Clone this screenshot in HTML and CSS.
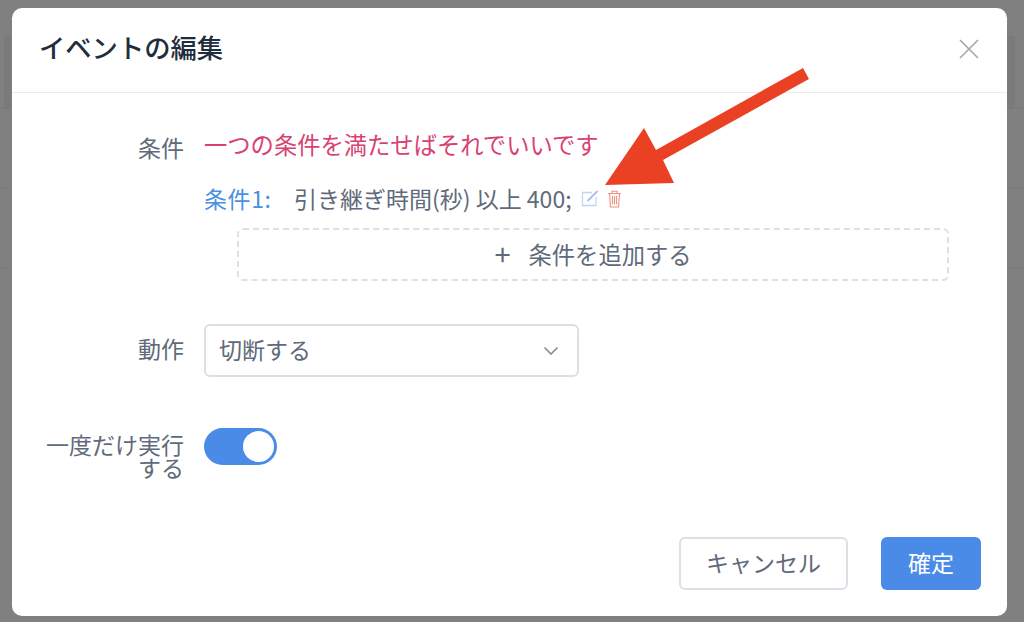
FILE: index.html
```html
<!DOCTYPE html>
<html lang="ja">
<head>
    <meta charset="UTF-8">
    <meta name="viewport" content="width=device-width, initial-scale=1.0">
    <title>イベントの編集</title>
    <link rel="stylesheet" href="styles.css">
</head>
<body>
    <div class="dialog">
        <header class="dialog-header">
            <h1>イベントの編集</h1>
            <button class="close-button" aria-label="閉じる">
                <svg width="20" height="20" viewBox="0 0 20 20"><path d="M1 1L19 19M19 1L1 19" stroke="#a3a6ad" stroke-width="1.6" fill="none"/></svg>
            </button>
        </header>
        <main class="dialog-body">
            <div class="field field-conditions">
                <div class="field-label">条件</div>
                <div class="field-content">
                    <p class="hint">一つの条件を満たせばそれでいいです</p>
                    <div class="condition">
                        <span class="condition-name">条件1:</span>
                        <span class="condition-text">引き継ぎ時間(秒) 以上 400;</span>
                        <svg class="icon-edit" width="18" height="17" viewBox="0 0 18 17"><path d="M11 2.5H1.5V15.5H15V7" stroke="#c5d4ee" stroke-width="1.3" fill="none"/><path d="M6.5 11L16.5 1" stroke="#a9c1ea" stroke-width="1.8" fill="none"/></svg>
                        <svg class="icon-trash" width="15" height="18" viewBox="0 0 15 18"><path d="M1 3.5H14M5 3.5V1.2H10V3.500M2.500 3.500L3.500 17H11.500L12.500 3.500M5.500 6V14.500M7.500 6V14.500M9.500 6V14.500" stroke="#f19180" stroke-width="1.100" fill="none"/></svg>
                    </div>
                    <button class="add-condition"><span class="plus">+</span>条件を追加する</button>
                </div>
            </div>
            <div class="field field-action">
                <div class="field-label">動作</div>
                <div class="select">
                    <span>切断する</span>
                    <svg width="16" height="10" viewBox="0 0 16 10"><path d="M1.500 1.500L8 8L14.500 1.500" stroke="#8b8f98" stroke-width="1.700" fill="none"/></svg>
                </div>
            </div>
            <div class="field field-once">
                <div class="field-label">一度だけ実行する</div>
                <div class="switch"><span class="switch-knob"></span></div>
            </div>
        </main>
        <footer class="dialog-footer">
            <button class="btn btn-cancel">キャンセル</button>
            <button class="btn btn-primary">確定</button>
        </footer>
    </div>
    <!-- annotation arrow on top of the screenshot -->
    <svg class="arrow" width="1024" height="622" viewBox="0 0 1024 622"><polygon points="803,68 809,79 663,160 674,183 605,185 644,128 656,150" fill="#ea4125"/></svg>
</body>
</html>
```

FILE: styles.css
```css
* { box-sizing: border-box; }
html, body { height: 100%; }
body {
    margin: 0;
    padding: 8px 17px 6px 12px;
    background-color: #808080;
    /* page behind the overlay: faint row lines and two bands */
    background-image:
        linear-gradient(#7a7a7a, #7a7a7a),
        linear-gradient(#7a7a7a, #7a7a7a),
        linear-gradient(#7a7a7a, #7a7a7a),
        linear-gradient(#7a7a7a, #7a7a7a),
        linear-gradient(#7a7a7a, #7a7a7a);
    background-repeat: no-repeat;
    background-size: 7px 72px, 8px 72px, 100% 1px, 100% 1px, 100% 1px;
    background-position: 4px 36px, 1007px 36px, 0 108px, 0 188px, 0 268px;
    font-family: "Noto Sans CJK JP", "Noto Sans", sans-serif;
    color: #606a7a;
    overflow: hidden;
}
button { font-family: inherit; }

.dialog {
    height: 100%;
    background-color: #fff;
    border-radius: 10px;
    display: flex;
    flex-direction: column;
}
.dialog-header {
    height: 85px;
    flex: none;
    border-bottom: 1px solid #ebebeb;
    display: flex;
    align-items: center;
    justify-content: space-between;
    padding: 0 28px 2px 27px;
}
.dialog-header h1 {
    margin: 0 0 6px;
    font-size: 26.3px;
    font-weight: 500;
    color: #1f2d3d;
}
.close-button {
    border: none;
    background: none;
    padding: 0;
    display: flex;
}

.dialog-body { flex: 1; padding-top: 28px; }
.field { display: flex; gap: 20px; }
.field-label {
    width: 172px;
    flex: none;
    text-align: right;
    font-size: 23px;
    line-height: 23px;
    padding-top: 15px;
}
.field-content { flex: 1; }
.hint {
    margin: 0;
    font-size: 23.3px;
    line-height: 46px;
    color: #d9426f;
}
.condition {
    display: flex;
    align-items: center;
    height: 46px;
    margin-top: 8px;
    margin-bottom: 7px;
    font-size: 23px;
}
.condition-name { color: #4a90e2; width: 90px; letter-spacing: 0.6px; }
.icon-edit { margin-left: 9px; margin-top: 1px; }
.icon-trash { margin-left: 8px; margin-top: 1px; }
.add-condition {
    display: block;
    margin: 0 0 0 33px;
    width: 712px;
    height: 53px;
    padding: 0 0 2px;
    background: #fff;
    border: 2px dashed #dcdfe6;
    border-radius: 6px;
    color: #606a7a;
    font-size: 23.3px;
}
.plus {
    margin-right: 18px;
    font-size: 29px;
    line-height: 0;
    vertical-align: -2px;
}

.field-action { margin-top: 43px; }
.field-action .field-label { padding-top: 13px; }
.select {
    width: 375px;
    height: 53px;
    border: 2px solid #dcdfe6;
    border-radius: 6px;
    display: flex;
    align-items: center;
    justify-content: space-between;
    padding: 0 18px 3px 13px;
    font-size: 23px;
}
.select svg { margin-top: 3px; }

.field-once { margin-top: 51px; }
.field-once .field-label { padding-top: 5px; padding-left: 30px; }
.switch {
    width: 73px;
    height: 37px;
    border-radius: 19px;
    background-color: #4a8be8;
    position: relative;
}
.switch-knob {
    position: absolute;
    top: 3px;
    right: 3px;
    width: 31px;
    height: 31px;
    border-radius: 50%;
    background-color: #fff;
}

.dialog-footer {
    display: flex;
    justify-content: flex-end;
    gap: 33px;
    padding: 0 26px 26px 0;
}
.btn {
    height: 53px;
    border-radius: 6px;
    padding: 0 0 3px;
    font-size: 23px;
}
.btn-cancel {
    width: 169px;
    background: #fff;
    border: 2px solid #dcdfe6;
    color: #606a7a;
}
.btn-primary {
    width: 100px;
    background-color: #4a8be8;
    border: none;
    color: #fff;
}

.arrow {
    position: absolute;
    top: 0;
    left: 0;
    pointer-events: none;
}
```
